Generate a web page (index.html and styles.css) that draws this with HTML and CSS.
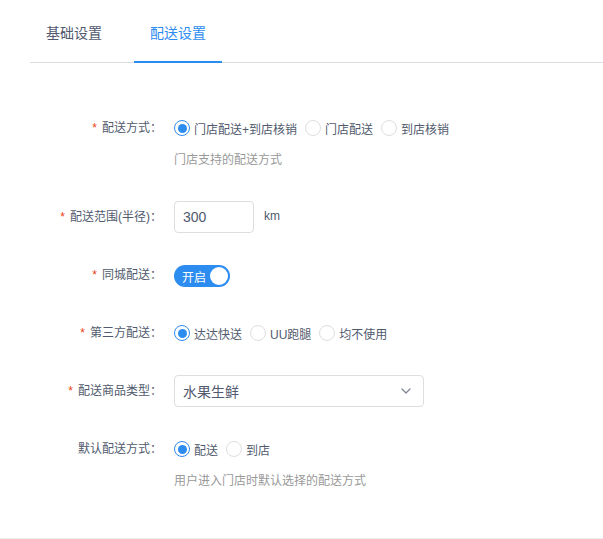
FILE: index.html
```html
<!DOCTYPE html>
<html lang="zh-CN">
<head>
<meta charset="utf-8">
<title>配送设置</title>
<link rel="stylesheet" href="styles.css">
</head>
<body>
<div class="page">
  <div class="tabs">
    <div class="tab">基础设置</div>
    <div class="tab active">配送设置</div>
  </div>
  <div class="form">
    <div class="item">
      <div class="label req">配送方式：</div>
      <div class="content">
        <div class="group">
          <span class="radio checked"><span class="dot"><span class="inner"></span></span>门店配送+到店核销</span>
          <span class="radio"><span class="dot"></span>门店配送</span>
          <span class="radio"><span class="dot"></span>到店核销</span>
        </div>
        <div class="help">门店支持的配送方式</div>
      </div>
    </div>
    <div class="item">
      <div class="label req">配送范围(半径)：</div>
      <div class="content">
        <div class="group">
          <div class="input">300</div>
          <span class="unit">km</span>
        </div>
      </div>
    </div>
    <div class="item">
      <div class="label req">同城配送：</div>
      <div class="content">
        <div class="group">
          <span class="switch"><span class="switch-text">开启</span><span class="knob"></span></span>
        </div>
      </div>
    </div>
    <div class="item">
      <div class="label req">第三方配送：</div>
      <div class="content">
        <div class="group">
          <span class="radio checked"><span class="dot"><span class="inner"></span></span>达达快送</span>
          <span class="radio"><span class="dot"></span>UU跑腿</span>
          <span class="radio"><span class="dot"></span>均不使用</span>
        </div>
      </div>
    </div>
    <div class="item">
      <div class="label req">配送商品类型：</div>
      <div class="content">
        <div class="select">
          <span>水果生鲜</span>
          <svg class="arrow" width="10" height="6" viewBox="0 0 10 6"><polyline points="1,1 5,5 9,1" fill="none" stroke="#808695" stroke-width="1.3" stroke-linecap="round" stroke-linejoin="round"/></svg>
        </div>
      </div>
    </div>
    <div class="item last">
      <div class="label">默认配送方式：</div>
      <div class="content">
        <div class="group">
          <span class="radio checked"><span class="dot"><span class="inner"></span></span>配送</span>
          <span class="radio"><span class="dot"></span>到店</span>
        </div>
        <div class="help">用户进入门店时默认选择的配送方式</div>
      </div>
    </div>
  </div>
</div>
</body>
</html>
```

FILE: styles.css
```css
html, body {
  margin: 0;
  padding: 0;
  background: #fff;
}
body {
  font-family: "Liberation Sans", "Noto Sans CJK SC", sans-serif;
  font-size: 12px;
  color: #515a6e;
}
.page {
  border-bottom: 1px solid #efefef;
}
.tabs {
  display: flex;
  margin-left: 30px;
  border-bottom: 1px solid #dcdee2;
}
.tab {
  font-size: 14px;
  line-height: 22px;
  padding: 22px 16px 17px;
  margin-right: 16px;
  margin-bottom: -1px;
  border-bottom: 2px solid transparent;
  color: #515a6e;
}
.tab.active {
  color: #2d8cf0;
  border-bottom-color: #2d8cf0;
}
.form {
  padding: 49px 0 42px;
}
.item {
  display: flex;
  align-items: flex-start;
  margin-bottom: 26px;
}
.item.last {
  margin-bottom: 0;
}
.label {
  width: 174px;
  box-sizing: border-box;
  padding-right: 12px;
  text-align: right;
  line-height: 32px;
  color: #515a6e;
  white-space: nowrap;
}
.label.req::before {
  content: "*";
  color: #ed4014;
  margin-right: 5px;
}
.content {
  display: flex;
  flex-direction: column;
}
.group {
  display: flex;
  align-items: center;
  height: 32px;
}
.radio {
  display: inline-flex;
  align-items: center;
  margin-right: 8px;
  white-space: nowrap;
}
.dot {
  width: 16px;
  height: 16px;
  box-sizing: border-box;
  border: 1px solid #dcdee2;
  border-radius: 50%;
  margin-right: 4px;
  display: flex;
  align-items: center;
  justify-content: center;
  background: #fff;
}
.radio.checked .dot {
  border: 1.5px solid #2d8cf0;
}
.inner {
  width: 9px;
  height: 9px;
  border-radius: 50%;
  background: #2d8cf0;
}
.help {
  padding-top: 2px;
  line-height: 29px;
  color: #999;
}
.input {
  width: 80px;
  height: 32px;
  box-sizing: border-box;
  border: 1px solid #dcdee2;
  border-radius: 4px;
  padding: 0 8px;
  font-size: 14px;
  line-height: 30px;
  color: #515a6e;
}
.unit {
  margin-left: 10px;
  margin-top: -2px;
}
.switch {
  width: 56px;
  height: 22px;
  border-radius: 11px;
  background: #2d8cf0;
  display: flex;
  align-items: center;
  justify-content: space-between;
  padding: 0 2px 0 8px;
  box-sizing: border-box;
  margin-top: 2px;
}
.switch-text {
  color: #fff;
  font-size: 12px;
}
.knob {
  width: 18px;
  height: 18px;
  border-radius: 50%;
  background: #fff;
}
.select {
  width: 250px;
  height: 32px;
  box-sizing: border-box;
  border: 1px solid #dcdee2;
  border-radius: 4px;
  padding: 0 12px 0 8px;
  display: flex;
  align-items: center;
  justify-content: space-between;
  font-size: 14px;
  color: #515a6e;
}
```
